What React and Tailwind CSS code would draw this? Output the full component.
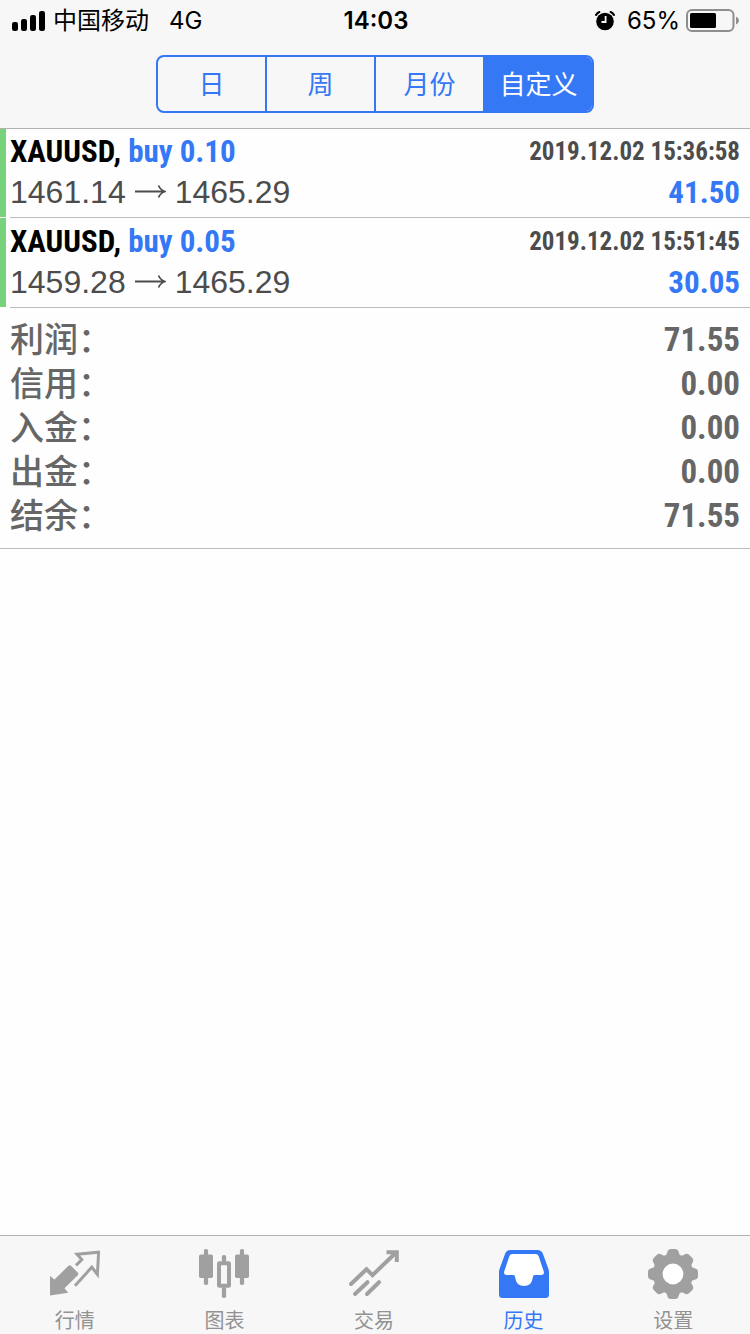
import { useState } from "react";

const UI = "font-['Inter','Noto_Sans_CJK_SC',sans-serif]";
const NARROW = "font-['Roboto_Condensed','Liberation_Sans',sans-serif] font-bold";

const RANGES = ["日", "周", "月份", "自定义"];

const DEALS = [
  { symbol: "XAUUSD", side: "buy 0.10", open: "1461.14", close: "1465.29", time: "2019.12.02 15:36:58", profit: "41.50" },
  { symbol: "XAUUSD", side: "buy 0.05", open: "1459.28", close: "1465.29", time: "2019.12.02 15:51:45", profit: "30.05" },
];

const TOTALS = [
  ["利润", "71.55"],
  ["信用", "0.00"],
  ["入金", "0.00"],
  ["出金", "0.00"],
  ["结余", "71.55"],
];

function SignalIcon() {
  return (
    <svg className="h-5 w-[33px]" viewBox="0 0 33 20" fill="currentColor" aria-hidden="true">
      <rect x="0" y="11" width="6" height="9" rx="2.2" />
      <rect x="9" y="8" width="6" height="12" rx="2.2" />
      <rect x="18" y="4" width="6" height="16" rx="2.2" />
      <rect x="27" y="0" width="6" height="20" rx="2.2" />
    </svg>
  );
}

function AlarmIcon() {
  return (
    <svg className="h-5 w-5" viewBox="0 0 20 20" aria-hidden="true">
      <circle cx="10" cy="10.5" r="8.8" fill="#000" />
      <path d="M1 4Q2.2 1.8 4.4 1M19 4Q17.8 1.8 15.6 1" fill="none" stroke="#000" strokeWidth="2" strokeLinecap="round" />
      <path d="M10.6 5V11H6.5" fill="none" stroke="#f7f7f7" strokeWidth="1.8" />
    </svg>
  );
}

function BatteryIcon() {
  return (
    <svg className="h-6 w-[54px]" viewBox="0 0 54 24" aria-hidden="true">
      <rect x="1" y="1" width="46.5" height="21" rx="5" fill="none" stroke="#8e8e8e" strokeWidth="2" />
      <rect x="4" y="4" width="26" height="15" rx="1.5" fill="#000" />
      <path d="M50 7.5Q53 9 53 11.5T50 15.5Z" fill="#8e8e8e" />
    </svg>
  );
}

function ArrowIcon() {
  return (
    <svg className="h-4 w-[31px]" viewBox="0 0 31 16" fill="none" stroke="currentColor" strokeWidth="1.8" aria-hidden="true">
      <path d="M0 7.5H29.5M23.5 1.5Q25.5 6 30 7.5Q25.5 9 23.5 13.5" />
    </svg>
  );
}

function QuotesIcon() {
  return (
    <svg className="h-[50px] w-[50px]" viewBox="0 0 50 50" aria-hidden="true">
      <path d="M0 27L4.5 30.5L18 17.2Q19.6 15.6 21.2 17L28 23.8Q28.8 25 27.8 26.2L14.5 39.3L18.2 43.8L0 46.6Z" fill="#a0a0a0" />
      <path d="M26 16.4L31.8 10.6L27 5.2L48.6 3.2L47.4 25.4L41.8 18.2L25 36.8" fill="none" stroke="#a0a0a0" strokeWidth="3" />
    </svg>
  );
}

function ChartIcon() {
  return (
    <svg className="h-[50px] w-[50px]" viewBox="0 0 50 50" fill="#a0a0a0" aria-hidden="true">
      <rect x="0" y="5.5" width="14" height="23.5" rx="1.8" />
      <rect x="4.9" y="0" width="4.2" height="36" rx="1.8" />
      <rect x="36" y="5.5" width="14" height="23.5" rx="1.8" />
      <rect x="40.9" y="0" width="4.2" height="36" rx="1.8" />
      <rect x="22.9" y="6" width="4.2" height="8" rx="1.8" />
      <rect x="22.9" y="38" width="4.2" height="11" rx="1.8" />
      <rect x="20" y="14.2" width="10" height="22.6" rx="0.5" fill="none" stroke="#a0a0a0" strokeWidth="4" />
    </svg>
  );
}

function TradeIcon() {
  return (
    <svg className="h-[50px] w-[50px]" viewBox="0 0 50 50" fill="none" stroke="#a0a0a0" strokeWidth="4" aria-hidden="true">
      <path d="M2 35L17.5 20.2L23.5 26.2L46.5 4" strokeLinecap="round" />
      <path d="M37.5 3.2H47.8V13" />
      <path d="M6 45L18.5 33.2M18 45L30 33.2" strokeLinecap="round" />
    </svg>
  );
}

function HistoryIcon() {
  return (
    <svg className="h-[50px] w-[50px]" viewBox="0 0 50 50" aria-hidden="true">
      <path
        d="M13.3 5H36.7Q38.8 5 39.6 7L44.8 22.5Q45.5 26 43 26H34Q34 36.5 25 36.5T16 26H7Q4.5 26 5.2 22.5L10.4 7Q11.2 5 13.3 5Z"
        fill="#fff"
      />
      <path
        fillRule="evenodd"
        fill="#3478f6"
        d="M11.5 1H38.5Q42.3 1 43.8 4.5L49.3 19.5Q50 21.5 50 24V45.5Q50 49 46.5 49H3.5Q0 49 0 45.5V24Q0 21.5 .7 19.5L6.2 4.5Q7.7 1 11.5 1ZM13.3 5Q11.2 5 10.4 7L5.2 22.5Q4.5 26 7 26H14.5Q16 26 16.2 28.5Q17 37 25 37Q33 37 33.8 28.5Q34 26 35.5 26H43Q45.5 26 44.8 22.5L39.6 7Q38.8 5 36.7 5Z"
      />
    </svg>
  );
}

function SettingsIcon() {
  return (
    <svg className="h-[50px] w-[50px]" viewBox="-25 -25 50 50" aria-hidden="true">
      <g fill="#a0a0a0">
        <circle r="20" />
        {[0, 45, 90, 135, 180, 225, 270, 315].map((a) => (
          <path key={a} transform={`rotate(${a})`} d="M-8.6-17.5Q-6.4-18.5-5.8-21.5Q-5.2-25-2-25H2Q5.2-25 5.8-21.5Q6.4-18.5 8.6-17.5L4-14H-4Z" />
        ))}
      </g>
      <circle r="10.4" fill="#fff" />
    </svg>
  );
}

const TABS = [
  { label: "行情", Icon: QuotesIcon },
  { label: "图表", Icon: ChartIcon },
  { label: "交易", Icon: TradeIcon },
  { label: "历史", Icon: HistoryIcon, active: true },
  { label: "设置", Icon: SettingsIcon },
];

function StatusBar() {
  return (
    <div className="grid h-[42px] grid-cols-[1fr_auto_1fr] items-center pl-3 pr-[10px] text-2xl text-black">
      <div className="flex items-center gap-2">
        <SignalIcon />
        <span>中国移动</span>
        <span className="pl-3">4G</span>
      </div>
      <time className="font-semibold">14:03</time>
      <div className="flex items-center justify-end gap-[6px]">
        <AlarmIcon />
        <span className="pl-[6px]">65%</span>
        <BatteryIcon />
      </div>
    </div>
  );
}

function DealRow({ deal }) {
  return (
    <li className="flex h-[90px] gap-1">
      <span className="mb-px w-[6px] bg-[#77d37b]" />
      <div className="flex flex-1 justify-between border-b border-[#bcbcbc] pr-[10px] pt-1">
        <div>
          <p className={`${NARROW} text-[31px] leading-10 text-black`}>
            {deal.symbol}, <span className="text-[#3478f6]">{deal.side}</span>
          </p>
          <p className="flex items-center gap-[9px] text-[32px] leading-10 text-[#4c4c4c]">
            {deal.open}
            <ArrowIcon />
            {deal.close}
          </p>
        </div>
        <div className={`${NARROW} text-right`}>
          <p className="text-[25px] leading-10 text-[#4c4c4c]">{deal.time}</p>
          <p className="text-[31px] leading-[42px] text-[#3478f6]">{deal.profit}</p>
        </div>
      </div>
    </li>
  );
}

export default function App() {
  const [range, setRange] = useState("自定义");
  return (
    <div className={`${UI} flex min-h-screen flex-col bg-[#fefefe]`}>
      <header className="relative h-32 bg-[#f7f7f7] shadow-[0_1px_0_#b2b2b2]">
        <StatusBar />
        <div className="mx-auto mt-[13px] flex h-[58px] w-[438px] divide-x-2 divide-[#3478f6] overflow-hidden rounded-lg border-2 border-[#3478f6] bg-[#f7f7f7]">
          {RANGES.map((r) => (
            <button
              key={r}
              type="button"
              aria-pressed={r === range}
              onClick={() => setRange(r)}
              className={`flex-1 text-[26px] ${r === range ? "bg-[#3478f6] text-white" : "text-[#3478f6]"}`}
            >
              {r}
            </button>
          ))}
        </div>
      </header>

      <main className="flex-1 font-['Liberation_Sans','Noto_Sans_CJK_SC',sans-serif]">
        <ul>
          {DEALS.map((d) => (
            <DealRow key={d.time} deal={d} />
          ))}
        </ul>
        <dl className="border-b border-[#bcbcbc] p-[10px] leading-[44px] text-[#666]">
          {TOTALS.map(([label, value]) => (
            <div key={label} className="flex h-11 items-center justify-between">
              <dt className="font-['Roboto','Noto_Sans_CJK_SC',sans-serif] text-[34px] font-medium">{label}：</dt>
              <dd className={`${NARROW} text-[33px]`}>{value}</dd>
            </div>
          ))}
        </dl>
      </main>

      <nav className="grid h-[99px] grid-cols-5 border-t border-[#b2b2b2] bg-[#f7f7f7] pr-[2px]">
        {TABS.map(({ label, Icon, active }) => (
          <a
            key={label}
            href="#"
            aria-current={active ? "page" : undefined}
            className={`flex flex-col items-center gap-2 pt-[13px] text-xl leading-7 ${active ? "text-[#3478f6]" : "text-[#929292]"}`}
          >
            <Icon />
            {label}
          </a>
        ))}
      </nav>
    </div>
  );
}
